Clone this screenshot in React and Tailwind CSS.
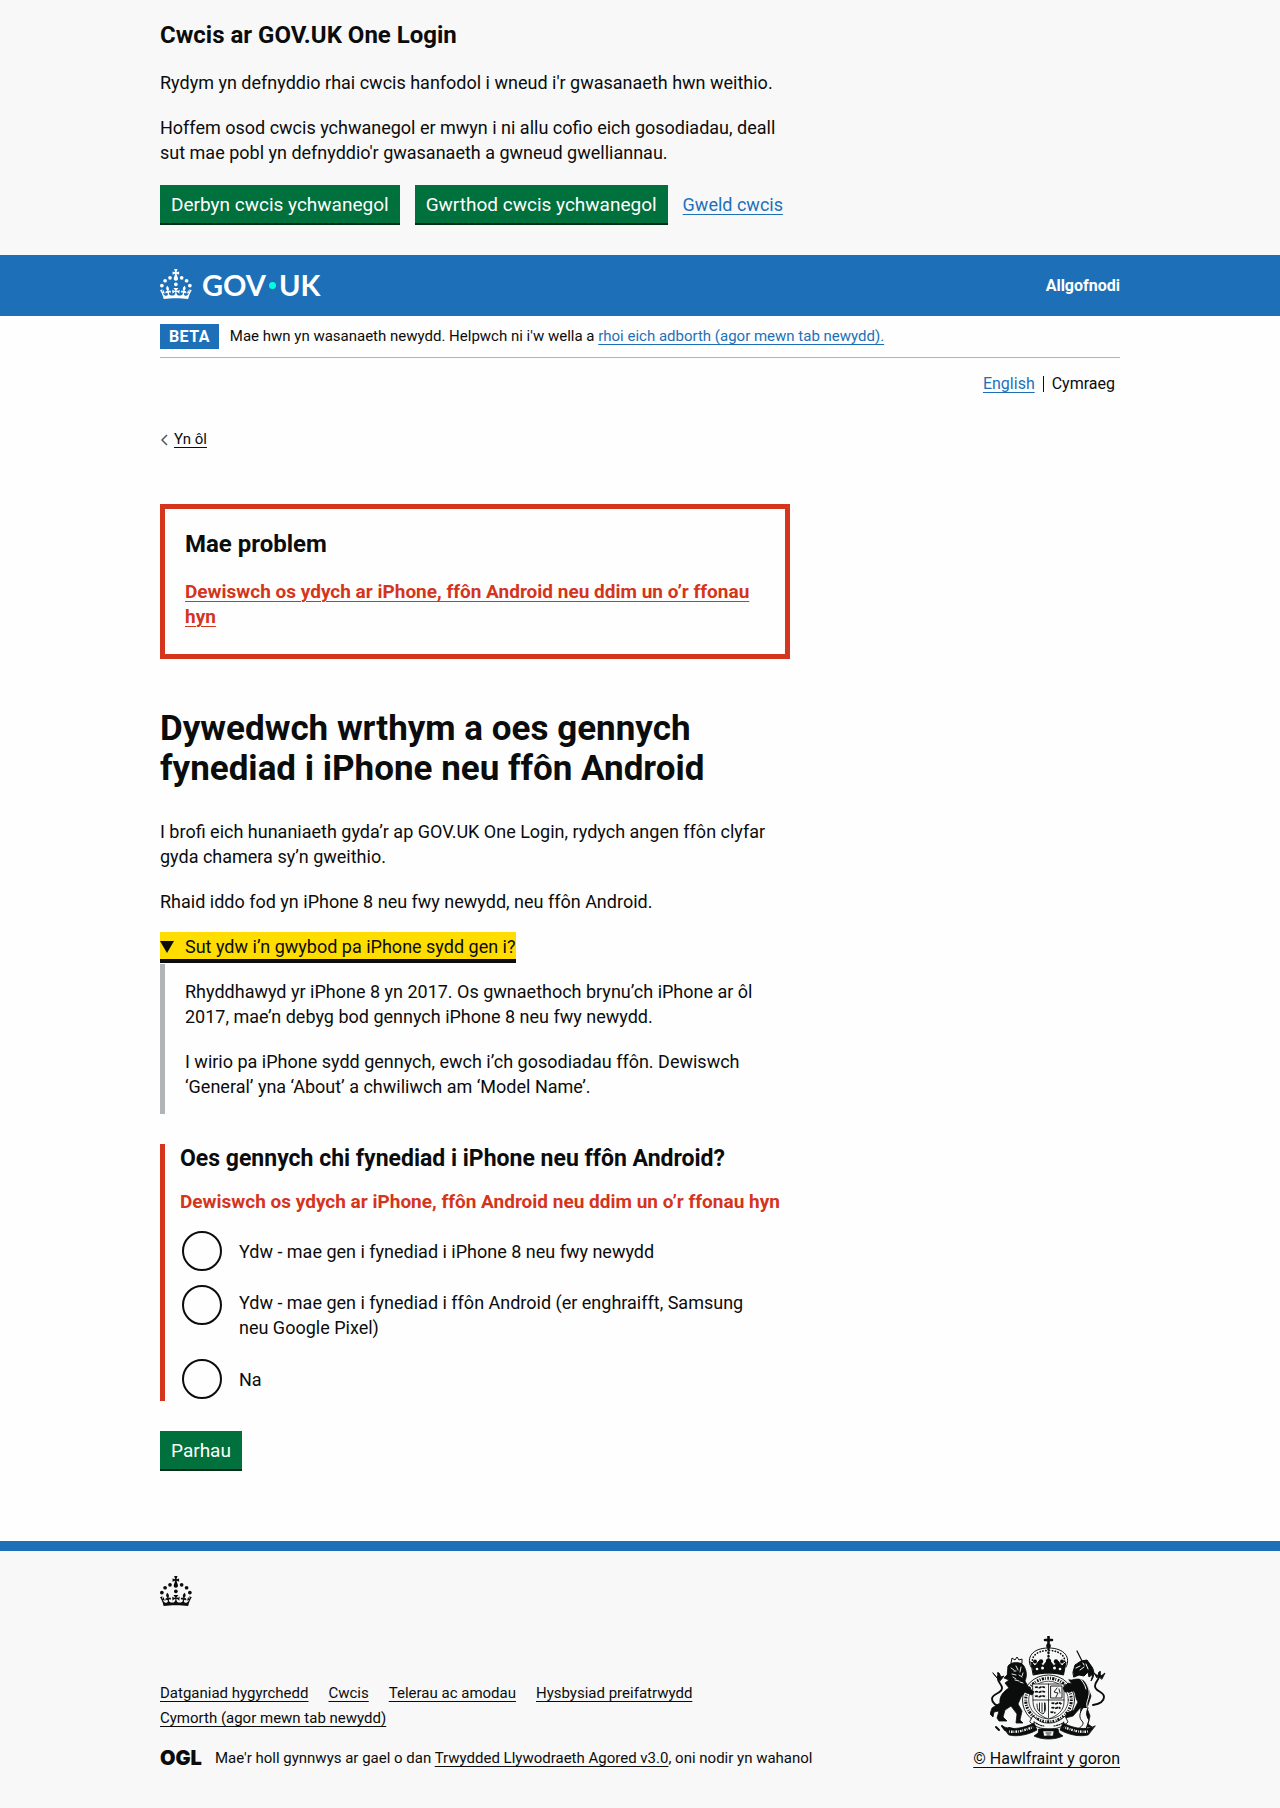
function Crown() {
  return (
    <g>
      <circle cx="20" cy="17.6" r="3.7" />
      <circle cx="10.2" cy="23.5" r="3.7" />
      <circle cx="3.7" cy="33.2" r="3.7" />
      <circle cx="31.7" cy="30.6" r="3.7" />
      <circle cx="43.3" cy="17.6" r="3.7" />
      <circle cx="53.2" cy="23.5" r="3.7" />
      <circle cx="59.7" cy="33.2" r="3.7" />
      <path d="M33.1,9.8c.2-.1.3-.3.5-.5l4.6,2.4v-6.8l-4.6,1.5c-.1-.2-.3-.3-.5-.5l1.9-5.9h-6.7l1.9,5.9c-.2.1-.3.3-.5.5l-4.6-1.5v6.8l4.6-2.4c.1.2.3.3.5.5l-2.6,8c-.9,2.8,1.2,5.7,4.1,5.7h0c3,0,5.1-2.9,4.1-5.7l-2.6-8ZM37,37.9s-3.4,3.8-4.1,6.1c2.2,0,4.2-.5,6.4-2.8l-.7,8.5c-2-2.8-4.4-4.1-5.7-3.8.1,3.1.5,6.7,5.8,7.2,3.7.3,6.7-1.5,7-3.8.4-2.6-2-4.3-3.7-1.6-1.4-4.5,2.4-6.1,4.9-3.2-1.9-4.5-1.8-7.7,2.4-10.9,3,4,2.6,7.3-1.2,11.1,2.4-1.3,6.2,0,4,4.6-1.2-2.8-3.7-2.2-4.2.2-.3,1.7.7,3.7,3,4.2,1.9.3,4.7-.9,7-5.9-1.3,0-2.4.7-3.9,1.7l2.4-8c.6,2.3,1.4,3.7,2.2,4.5.6-1.6.5-2.8,0-5.3l5,1.8c-2.6,3.6-5.2,8.7-7.3,17.5-7.4-1.1-15.7-1.7-24.5-1.7h0c-8.8,0-17.1.6-24.5,1.7-2.1-8.9-4.7-13.9-7.3-17.5l5-1.8c-.5,2.5-.6,3.7,0,5.3.8-.8,1.6-2.3,2.2-4.5l2.4,8c-1.5-1-2.6-1.7-3.9-1.7,2.3,5,5.2,6.2,7,5.9,2.3-.4,3.3-2.4,3-4.2-.5-2.4-3-3.1-4.2-.2-2.2-4.6,1.6-6,4-4.6-3.7-3.7-4.2-7.1-1.2-11.1,4.2,3.2,4.3,6.4,2.4,10.9,2.5-2.8,6.3-1.3,4.9,3.2-1.8-2.7-4.1-1-3.7,1.6.3,2.3,3.3,4.1,7,3.8,5.4-.5,5.7-4.2,5.8-7.2-1.3-.2-3.7,1-5.7,3.8l-.7-8.5c2.2,2.3,4.2,2.7,6.4,2.8-.7-2.3-4.1-6.1-4.1-6.1h10.6,0Z" />
    </g>
  );
}

function RoyalArms() {
  const ink = "#0b0c0c";
  const paper = "#f8f8f8";
  return (
    <svg viewBox="0 0 117 104" className="h-[104px] w-[117px]" fill="none" stroke={ink} strokeLinecap="round" strokeLinejoin="round" aria-hidden="true">
      {/* crown */}
      <path d="M58.500 0v8M55 4h7" strokeWidth="2.600" />
      <circle cx="58.500" cy="10" r="2.400" fill={ink} stroke="none" />
      <path d="M41 31c-5-9 1-19 17.500-19S81 22 76 31" strokeWidth="1" />
      <path d="M43.500 30c-4-8 2-15.500 15-15.500S77.500 22 73.500 30" strokeWidth="1.600" strokeDasharray="0.4 2.600" />
      <path d="M58.500 13v13" strokeWidth="2.400" strokeDasharray="0.5 3" />
      <path d="M41 26l4 4 4-5 4 5 5.500-7 5.500 7 4-5 4 5 4-4-2.500 13c-10-2.500-20-2.500-30 0z" fill={ink} strokeWidth="1" />
      <g fill={paper} stroke="none">
        <circle cx="47" cy="33" r="1.300" /><circle cx="52.500" cy="32" r="1.500" /><circle cx="64.500" cy="32" r="1.500" /><circle cx="70" cy="33" r="1.300" />
      </g>
      <g fill={ink} stroke="none">
        <circle cx="45" cy="25.500" r="2" /><circle cx="51" cy="25.500" r="2.200" /><circle cx="58.500" cy="25" r="2.600" /><circle cx="66" cy="25.500" r="2.200" /><circle cx="72" cy="25.500" r="2" />
      </g>
      {/* garter */}
      <ellipse cx="58.500" cy="64" rx="26" ry="25" fill={paper} strokeWidth="0.900" />
      <ellipse cx="58.500" cy="64" rx="22.800" ry="21.800" strokeWidth="3" strokeDasharray="1 1.200 2.200 1 0.800 1.600 1.600 1.200" strokeLinecap="butt" />
      <ellipse cx="58.500" cy="64" rx="19.800" ry="18.800" strokeWidth="0.700" />
      {/* shield */}
      <path d="M43 48h31v18c0 9-7 14-15.500 17C50 80 43 75 43 66z" fill={paper} strokeWidth="0.800" />
      <path d="M58.500 48v34M43 64h31" strokeWidth="0.800" />
      <path d="M45 51.500c2-1.500 3 1 5 0s3-1 6 .5M45 56c2-1.500 3 1 5 0s3-1 6 .5M45 60.500c2-1.500 3 1 5 0s3-1 6 .5M61.500 67.500c2-1.500 3 1 5 0s3-1 5 .5M61.500 72c2-1.500 3 1 5 0s2-1 4 .5M60.500 76.500c2-1.500 3 1 5 0" strokeWidth="1.700" strokeDasharray="3 0.8" strokeLinecap="butt" />
      <path d="M61 50h11v12H61zM67 52l-3 4 4 1-2 4M69 53l1 4" strokeWidth="0.900" />
      <path d="M47 68c0 6 2 8 6 10 3-3 3-6 2-11M49.500 67v8M52 67v9M54.500 67v8" strokeWidth="0.900" />
      {/* lion */}
      <path d="M21 27l1-5 3 2 2-3 2 3 3-1v4z" strokeWidth="1" />
      <path d="M18 30c2-4 13-5 16 0 3 6 3 10 1 15l4 7 5 4-2 3-7-3-4 5-3 7 4 7-2 9 3 3h-7l1-9-6-8-6 4-2 7 4 4h-8l-2-3 2-7-5 1-1 5-3-3 2-6 8-5c-1-7 4-12 9-15l-4-5 4-3-5-2 3-3z" fill={ink} strokeWidth="0.800" />
      <path d="M21 32l3 2M26 30l2 4M31 31l-1 5M22 38l4 1M29 39l3 2M25 44l4 1M33 37l-1 3M24 35h2M23 41l3 2M30 46l3 1" stroke={paper} strokeWidth="0.900" />
      <path d="M13 71c-6-1-11-3-11-8 0-6 10-5 10-11 0-4-4-5-4-9 0-3 1-4 0-6" strokeWidth="1.900" />
      <path d="M3 37l4 5 2-5 2 4 3-1-4 5z" fill={ink} strokeWidth="0.900" />
      <path d="M6 91l3 3M12 90l3 4M19 92l4 1" strokeWidth="2" />
      {/* unicorn */}
      <path d="M87 15l6 12" strokeWidth="1.200" />
      <path d="M83 36l2-7 6-4 6-1 5 7c3 5 2 10-1 14l2-7-4 3-1-5-4 4-5-1-5 2z" fill={ink} strokeWidth="1" />
      <path d="M86 32l4-2M90 34l4-3M96 28l2 5M93 27l1 2" stroke={paper} strokeWidth="1" />
      <path d="M82 44c6-2 12-1 15 5l4 11-4 12 3 8-2 8 4 3h-7l-1-6c-3-5-4-8-3-14l-8 9-8 2 2-5 7-3 4-8c-3-4-2-8-4-11l-9 1-2-4 5-5 4 1-3-4z" fill={ink} strokeWidth="0.800" />
      <path d="M93 42c4 6 7 11 6 17s-3 7-2 12M89 41c3 4 6 7 7 12" stroke={paper} strokeWidth="1" />
      <path d="M93 72c-4 5-4 10-1 13s-1 6-4 8h8l3-9c-3-4-3-8-1-12" fill={paper} strokeWidth="1" />
      <path d="M103 69c6-1 11-3 11-8 0-6-9-5-9-11 0-4 3-5 4-9l1-5" strokeWidth="1.900" />
      <path d="M104 37l3 5 2-6 2 4 4-3-3 6z" fill={ink} strokeWidth="0.900" />
      {/* motto ribbon */}
      <path d="M43 80c6 6 10 7 16 7s11-2 16-7l3 6c-5 5-11 7-19 7s-14-2-19-7z" fill={paper} strokeWidth="0.900" />
      <path d="M44 86c5 3 8 4 10 4M64 90c5-1 8-2 10-4" strokeWidth="1.200" strokeDasharray="1 1.400" />
      <path d="M12 90c10 5 22 2 32-3l3 7c-9 5-20 7-28 5zM105 90c-10 5-22 2-32-3l-3 7c9 5 20 7 28 5z" fill={ink} strokeWidth="0.800" />
      <path d="M19 95.500c8 1 16-1 24-4.500M98 95.500c-8 1-16-1-24-4.500" stroke={paper} strokeWidth="2.400" strokeDasharray="0.8 1.200 1.600 0.900" strokeLinecap="butt" />
      <path d="M49 93h19l1 4 4 3c-8 4-21 4-29 0l4-3z" fill={ink} strokeWidth="0.800" />
      <path d="M53 95h11l-1 5h-9z" fill={paper} strokeWidth="0.600" />
      <path d="M56 97h5M57 99h3" strokeWidth="0.900" />
    </svg>
  );
}

const link = "text-[#1d70b8] underline decoration-1 underline-offset-[3px]";
const inkLink = "underline decoration-1 underline-offset-[3px]";
const button = "bg-[#00703c] px-[11px] pt-[7px] pb-[6px] text-[19px] leading-[25px] text-white shadow-[0_2px_0_#002d18]";
const wrap = "mx-auto max-w-[960px]";
const column = "max-w-[630px]";

const options = [
  { id: "iphone", label: "Ydw - mae gen i fynediad i iPhone 8 neu fwy newydd" },
  { id: "android", label: "Ydw - mae gen i fynediad i ffôn Android (er enghraifft, Samsung neu Google Pixel)" },
  { id: "none", label: "Na" },
];

const footerLinks = ["Datganiad hygyrchedd", "Cwcis", "Telerau ac amodau", "Hysbysiad preifatrwydd", "Cymorth (agor mewn tab newydd)"];

function CookieBanner() {
  return (
    <section className="bg-[#f8f8f8] pt-5 pb-8" aria-label="Cwcis ar GOV.UK One Login">
      <div className={wrap}>
        <div className={column}>
          <h2 className="mb-5 text-2xl leading-[30px] font-bold">Cwcis ar GOV.UK One Login</h2>
          <p className="mb-5">Rydym yn defnyddio rhai cwcis hanfodol i wneud i'r gwasanaeth hwn weithio.</p>
          <p className="mb-5">Hoffem osod cwcis ychwanegol er mwyn i ni allu cofio eich gosodiadau, deall sut mae pobl yn defnyddio'r gwasanaeth a gwneud gwelliannau.</p>
        </div>
        <div className="flex flex-wrap items-center gap-[15px]">
          <button type="button" className={button}>Derbyn cwcis ychwanegol</button>
          <button type="button" className={button}>Gwrthod cwcis ychwanegol</button>
          <a href="#cwcis" className={link}>Gweld cwcis</a>
        </div>
      </div>
    </section>
  );
}

function Header() {
  return (
    <header className="bg-[#1d70b8] text-white">
      <div className={`${wrap} flex h-[61px] items-center justify-between`}>
        <a href="#hafan" aria-label="GOV.UK" className="flex items-center gap-[10px] pb-[3px] font-['Lato',sans-serif] text-[29px] leading-[30px] font-bold">
          <svg viewBox="0 0 64 60" className="h-[30px] w-8" fill="currentColor" aria-hidden="true"><Crown /></svg>
          <span className="flex items-center gap-[3px] pt-[2px]">
            GOV
            <span className="size-[7px] rounded-full bg-[#00ffe0]" />
            <span>UK</span>
          </span>
        </a>
        <a href="#allgofnodi" className="text-base leading-5 font-bold">Allgofnodi</a>
      </div>
    </header>
  );
}

function Footer() {
  return (
    <footer className="border-t-10 border-[#1d70b8] bg-[#f8f8f8] pt-[25px] pb-[37px] text-[15px]">
      <div className={wrap}>
        <svg viewBox="0 0 64 60" className="mb-[30px] h-[30px] w-8" fill="currentColor" aria-hidden="true"><Crown /></svg>
        <div className="flex items-end justify-between gap-[30px]">
          <div className="max-w-[700px]">
            <ul className="mb-[15px] flex max-w-[600px] flex-wrap gap-x-5">
              {footerLinks.map((text) => (
                <li key={text}><a href="#troedyn" className={inkLink}>{text}</a></li>
              ))}
            </ul>
            <div className="flex items-center gap-[13px]">
              <span className="font-['Inter',sans-serif] text-[20px] leading-[25px] font-black">OGL</span>
              <p>Mae'r holl gynnwys ar gael o dan <a href="#ogl" className={inkLink}>Trwydded Llywodraeth Agored v3.0</a>, oni nodir yn wahanol</p>
            </div>
          </div>
          <div className="flex flex-col items-end">
            <div className="mb-[6px] pr-[13px]"><RoyalArms /></div>
            <a href="#hawlfraint" className="text-base leading-[25px] underline decoration-1 underline-offset-[3px]">© Hawlfraint y goron</a>
          </div>
        </div>
      </div>
    </footer>
  );
}

export default function App() {
  return (
    <div className="bg-[#fefefe] font-['Roboto',sans-serif] text-lg leading-[25px] text-[#0b0c0c]">
      <CookieBanner />
      <Header />
      <div className={wrap}>
        <div className="flex items-center border-b border-[#b1b4b6] py-2 text-[15px]">
          <strong className="mr-[11px] bg-[#1d70b8] px-[9px] text-base leading-[25px] font-bold tracking-wide text-white">BETA</strong>
          <span>Mae hwn yn wasanaeth newydd. Helpwch ni i'w wella a <a href="#adborth" className={link}>rhoi eich adborth (agor mewn tab newydd).</a></span>
        </div>
        <nav aria-label="Iaith" className="mt-[13px] flex items-center justify-end pr-[5px] text-base leading-[26px]">
          <a href="#english" className={link}>English</a>
          <span className="mx-2 h-4 w-px bg-[#0b0c0c]" />
          <span>Cymraeg</span>
        </nav>
        <a href="#yn-ol" className="mt-[30px] inline-flex items-center text-[15px]">
          <svg viewBox="0 0 8 12" className="mr-[6px] h-3 w-2" fill="none" stroke="#505a5f" strokeWidth="1.500" aria-hidden="true"><path d="M7 1L2 6l5 5" /></svg>
          <span className={inkLink}>Yn ôl</span>
        </a>

        <main className={`${column} pt-[52px] pb-[72px]`}>
          <div role="alert" className="mb-[50px] border-5 border-[#d4351c] px-5 pt-5 pb-[25px]">
            <h2 className="mb-5 text-2xl leading-[30px] font-bold">Mae problem</h2>
            <a href="#iphone" className="text-[19px] font-bold text-[#d4351c] underline decoration-1 underline-offset-[3px]">
              Dewiswch os ydych ar iPhone, ffôn Android neu ddim un o’r ffonau hyn
            </a>
          </div>

          <h1 className="mb-[30px] text-[35px] leading-[40px] font-bold">Dywedwch wrthym a oes gennych fynediad i iPhone neu ffôn Android</h1>
          <p className="mb-5">I brofi eich hunaniaeth gyda’r ap GOV.UK One Login, rydych angen ffôn clyfar gyda chamera sy’n gweithio.</p>
          <p className="mb-5">Rhaid iddo fod yn iPhone 8 neu fwy newydd, neu ffôn Android.</p>

          <details open className="mb-[30px]">
            <summary className="mb-[5px] flex w-fit cursor-pointer list-none items-center bg-[#ffdd00] shadow-[0_-2px_#ffdd00,0_4px_#0b0c0c]">
              <svg viewBox="0 0 14 12" className="mr-[11px] h-3 w-[14px]" fill="currentColor" aria-hidden="true"><path d="M0 0h14L7 12z" /></svg>
              Sut ydw i’n gwybod pa iPhone sydd gen i?
            </summary>
            <div className="border-l-5 border-[#b1b4b6] px-5 py-[15px]">
              <p className="mb-5">Rhyddhawyd yr iPhone 8 yn 2017. Os gwnaethoch brynu’ch iPhone ar ôl 2017, mae’n debyg bod gennych iPhone 8 neu fwy newydd.</p>
              <p>I wirio pa iPhone sydd gennych, ewch i’ch gosodiadau ffôn. Dewiswch ‘General’ yna ‘About’ a chwiliwch am ‘Model Name’.</p>
            </div>
          </details>

          <form onSubmit={(event) => event.preventDefault()}>
            <fieldset className="mb-[30px] border-l-5 border-[#d4351c] pl-[15px]">
              <legend className="float-left mb-[15px] w-full text-[23px] leading-[30px] font-bold">Oes gennych chi fynediad i iPhone neu ffôn Android?</legend>
              <p className="clear-both mb-[15px] text-[19px] font-bold text-[#d4351c]">Dewiswch os ydych ar iPhone, ffôn Android neu ddim un o’r ffonau hyn</p>
              <div className="flex flex-col gap-[10px]">
                {options.map(({ id, label }) => (
                  <div key={id} className="flex items-start pl-[2px]">
                    <input id={id} type="radio" name="dyfais" className="mt-[2px] size-10 shrink-0 appearance-none rounded-full border-2 border-[#0b0c0c] checked:bg-[#0b0c0c]" />
                    <label htmlFor={id} className="flex min-h-[44px] max-w-[560px] items-center px-[17px] py-[7px]">{label}</label>
                  </div>
                ))}
              </div>
            </fieldset>
            <button type="submit" className={button}>Parhau</button>
          </form>
        </main>
      </div>
      <Footer />
    </div>
  );
}
